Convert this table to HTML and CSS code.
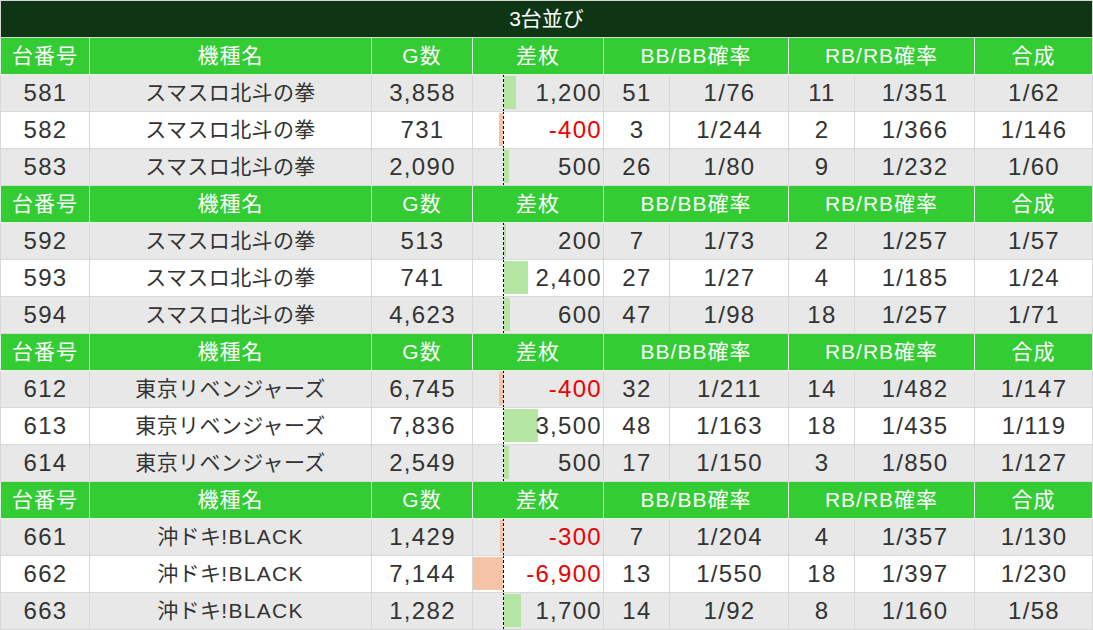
FILE: index.html
```html
<!DOCTYPE html>
<html lang="ja">
<head>
<meta charset="utf-8">
<title>3台並び</title>
<link rel="stylesheet" href="styles.css">
</head>
<body>
<table class="tbl">
  <colgroup>
    <col class="c-no"><col class="c-name"><col class="c-g"><col class="c-diff"><col class="c-cnt"><col class="c-rate"><col class="c-cnt"><col class="c-rate2"><col class="c-sum">
  </colgroup>
  <tr class="title"><th colspan="9">3台並び</th></tr>

  <tr class="head"><th>台番号</th><th>機種名</th><th>G数</th><th>差枚</th><th colspan="2">BB/BB確率</th><th colspan="2">RB/RB確率</th><th>合成</th></tr>
  <tr class="odd"><td class="num">581</td><td class="name">スマスロ北斗の拳</td><td class="num">3,858</td><td class="diff"><span class="bar pos" style="width:12px"></span><span class="val">1,200</span></td><td class="num">51</td><td class="num">1/76</td><td class="num">11</td><td class="num">1/351</td><td class="num">1/62</td></tr>
  <tr class="even"><td class="num">582</td><td class="name">スマスロ北斗の拳</td><td class="num">731</td><td class="diff"><span class="bar neg" style="width:4px"></span><span class="val minus">-400</span></td><td class="num">3</td><td class="num">1/244</td><td class="num">2</td><td class="num">1/366</td><td class="num">1/146</td></tr>
  <tr class="odd"><td class="num">583</td><td class="name">スマスロ北斗の拳</td><td class="num">2,090</td><td class="diff"><span class="bar pos" style="width:5px"></span><span class="val">500</span></td><td class="num">26</td><td class="num">1/80</td><td class="num">9</td><td class="num">1/232</td><td class="num">1/60</td></tr>

  <tr class="head"><th>台番号</th><th>機種名</th><th>G数</th><th>差枚</th><th colspan="2">BB/BB確率</th><th colspan="2">RB/RB確率</th><th>合成</th></tr>
  <tr class="odd"><td class="num">592</td><td class="name">スマスロ北斗の拳</td><td class="num">513</td><td class="diff"><span class="bar pos" style="width:2px"></span><span class="val">200</span></td><td class="num">7</td><td class="num">1/73</td><td class="num">2</td><td class="num">1/257</td><td class="num">1/57</td></tr>
  <tr class="even"><td class="num">593</td><td class="name">スマスロ北斗の拳</td><td class="num">741</td><td class="diff"><span class="bar pos" style="width:24px"></span><span class="val">2,400</span></td><td class="num">27</td><td class="num">1/27</td><td class="num">4</td><td class="num">1/185</td><td class="num">1/24</td></tr>
  <tr class="odd"><td class="num">594</td><td class="name">スマスロ北斗の拳</td><td class="num">4,623</td><td class="diff"><span class="bar pos" style="width:6px"></span><span class="val">600</span></td><td class="num">47</td><td class="num">1/98</td><td class="num">18</td><td class="num">1/257</td><td class="num">1/71</td></tr>

  <tr class="head"><th>台番号</th><th>機種名</th><th>G数</th><th>差枚</th><th colspan="2">BB/BB確率</th><th colspan="2">RB/RB確率</th><th>合成</th></tr>
  <tr class="odd"><td class="num">612</td><td class="name">東京リベンジャーズ</td><td class="num">6,745</td><td class="diff"><span class="bar neg" style="width:4px"></span><span class="val minus">-400</span></td><td class="num">32</td><td class="num">1/211</td><td class="num">14</td><td class="num">1/482</td><td class="num">1/147</td></tr>
  <tr class="even"><td class="num">613</td><td class="name">東京リベンジャーズ</td><td class="num">7,836</td><td class="diff"><span class="bar pos" style="width:34px"></span><span class="val">3,500</span></td><td class="num">48</td><td class="num">1/163</td><td class="num">18</td><td class="num">1/435</td><td class="num">1/119</td></tr>
  <tr class="odd"><td class="num">614</td><td class="name">東京リベンジャーズ</td><td class="num">2,549</td><td class="diff"><span class="bar pos" style="width:5px"></span><span class="val">500</span></td><td class="num">17</td><td class="num">1/150</td><td class="num">3</td><td class="num">1/850</td><td class="num">1/127</td></tr>

  <tr class="head"><th>台番号</th><th>機種名</th><th>G数</th><th>差枚</th><th colspan="2">BB/BB確率</th><th colspan="2">RB/RB確率</th><th>合成</th></tr>
  <tr class="odd"><td class="num">661</td><td class="name">沖ドキ<span class="latin">!BLACK</span></td><td class="num">1,429</td><td class="diff"><span class="bar neg" style="width:3px"></span><span class="val minus">-300</span></td><td class="num">7</td><td class="num">1/204</td><td class="num">4</td><td class="num">1/357</td><td class="num">1/130</td></tr>
  <tr class="even"><td class="num">662</td><td class="name">沖ドキ<span class="latin">!BLACK</span></td><td class="num">7,144</td><td class="diff"><span class="bar neg" style="width:30px"></span><span class="val minus">-6,900</span></td><td class="num">13</td><td class="num">1/550</td><td class="num">18</td><td class="num">1/397</td><td class="num">1/230</td></tr>
  <tr class="odd"><td class="num">663</td><td class="name">沖ドキ<span class="latin">!BLACK</span></td><td class="num">1,282</td><td class="diff"><span class="bar pos" style="width:17px"></span><span class="val">1,700</span></td><td class="num">14</td><td class="num">1/92</td><td class="num">8</td><td class="num">1/160</td><td class="num">1/58</td></tr>
</table>
</body>
</html>
```

FILE: styles.css
```css
html, body {
  margin: 0;
  padding: 0;
  background: #ffffff;
}

body {
  font-family: "Liberation Sans", "Noto Sans CJK JP", sans-serif;
  color: #333333;
}

.tbl {
  width: 1092px;
  border-collapse: collapse;
  table-layout: fixed;
}

.c-no { width: 89px; }
.c-name { width: 282px; }
.c-g { width: 101px; }
.c-diff { width: 131px; }
.c-cnt { width: 66px; }
.c-rate { width: 119px; }
.c-rate2 { width: 120px; }
.c-sum { width: 118px; }

.tbl th,
.tbl td {
  height: 36px;
  padding: 0;
  border: 1px solid #d8d8d8;
  text-align: center;
  vertical-align: middle;
  white-space: nowrap;
  overflow: hidden;
  line-height: 24px;
}

.tbl .title th {
  background: #0e3514;
  color: #ffffff;
  font-size: 21px;
  font-weight: normal;
  border-color: #d8d8d8;
}

.tbl .head th {
  background: #33cc33;
  color: #ffffff;
  font-size: 21px;
  font-weight: normal;
  letter-spacing: 1px;
  border-color: #e3f3e3;
}

.odd td { background: #e8e8e8; }
.even td { background: #ffffff; }

.tbl .num {
  font-size: 24px;
  letter-spacing: 1.3px;
  text-indent: 1px;
}

.tbl .name {
  font-size: 21px;
  letter-spacing: 0.4px;
}

.latin {
  letter-spacing: 1.3px;
}

.tbl .diff {
  position: relative;
  text-align: right;
  font-size: 24px;
  letter-spacing: 1.3px;
}

.diff::before {
  content: "";
  position: absolute;
  left: 30px;
  top: -1px;
  bottom: -1px;
  width: 1px;
  background: repeating-linear-gradient(to bottom, #000000 0, #000000 3px, transparent 3px, transparent 5px);
  z-index: 2;
}

.bar {
  position: absolute;
  top: 1px;
  bottom: 2px;
  z-index: 0;
}

.bar.pos {
  left: 31px;
  background: #b5e5a2;
}

.bar.neg {
  right: 100px;
  background: #f5c3a6;
}

.val {
  position: relative;
  z-index: 1;
  padding-right: 1px;
}

.minus {
  color: #ee0000;
}
```
